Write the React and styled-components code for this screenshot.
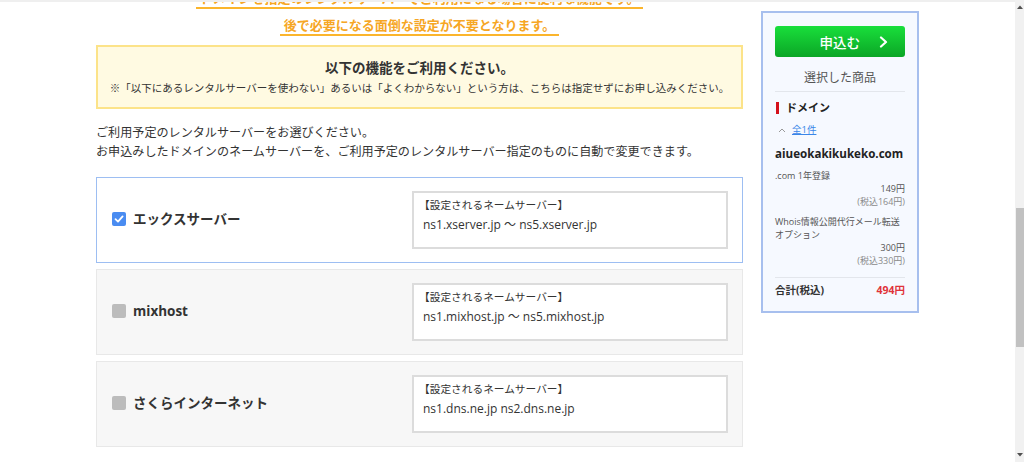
import React from "react";
import styled, { createGlobalStyle } from "styled-components";

const Global = createGlobalStyle`
  html, body { margin: 0; padding: 0; background: #fff; }
  body { font-family: "Open Sans", "Noto Sans CJK JP", sans-serif; color: #333; }
  * { box-sizing: border-box; }
`;

const Page = styled.div`
  display: flex;
  width: 1024px;
  height: 462px;
  overflow: hidden;
`;

const Viewport = styled.div`
  flex: 1;
  height: 462px;
  overflow: hidden;
  border-top: 2px solid #efefef;
`;

const Layout = styled.div`
  display: flex;
  align-items: flex-start;
  padding-left: 96px;
  gap: 18px;
`;

const Main = styled.div`
  width: 647px;
  display: flex;
  flex-direction: column;
`;

const Headlines = styled.div`
  display: flex;
  flex-direction: column;
  align-items: center;
  gap: 9px;
  margin-top: -11px;
`;

const Headline = styled.div`
  font-size: 13px;
  line-height: 15px;
  font-weight: 700;
  color: #f6a624;
  padding: 0 4px 1px;
  border-bottom: 2px solid #fbb52c;
  white-space: nowrap;
`;

const Notice = styled.div`
  margin-top: 9px;
  background: #fffae2;
  border: 2px solid #fce389;
  padding: 11px 0 11px;
  text-align: center;
`;

const NoticeTitle = styled.div`
  font-size: 13.5px;
  line-height: 20px;
  font-weight: 700;
  color: #333;
  margin-bottom: 2px;
`;

const NoticeText = styled.div`
  font-size: 10.5px;
  line-height: 16px;
  color: #333;
`;

const Lead = styled.p`
  margin: 14px 0 0;
  font-size: 12.1px;
  line-height: 19px;
  color: #333;
`;

const Options = styled.div`
  margin-top: 16px;
  display: flex;
  flex-direction: column;
  gap: 6px;
`;

const Card = styled.div`
  height: 86px;
  display: flex;
  align-items: center;
  padding: 0 14px 0 15px;
  border: 1px solid ${(p) => (p.$active ? "#9dbef2" : "#e8e8e8")};
  background: ${(p) => (p.$active ? "#fff" : "#f7f7f7")};
`;

const Choice = styled.label`
  flex: 1;
  display: flex;
  align-items: center;
  gap: 7px;
  margin-top: -2px;
  font-size: 13.5px;
  font-weight: 700;
  color: #333;
  line-height: 20px;
`;

const Box = styled.span`
  width: 14px;
  height: 14px;
  border-radius: 2px;
  background: ${(p) => (p.$checked ? "#4a8cf1" : "#bcbcbc")};
  display: flex;
  align-items: center;
  justify-content: center;
`;

const NsBox = styled.div`
  width: 316px;
  height: 58px;
  background: #fff;
  border: 2px solid #dcdcdc;
  padding: 4px 9px;
`;

const NsLabel = styled.div`
  font-size: 10.7px;
  line-height: 16px;
  margin-left: -4px;
  margin-bottom: 3px;
  color: #333;
`;

const NsValue = styled.div`
  font-size: 12px;
  line-height: 18px;
  color: #333;
`;

const Side = styled.aside`
  margin-top: 9px;
  width: 158px;
  border: 2px solid #a7bfee;
  background: #f6f9ff;
  padding: 13px 12px 12px;
  display: flex;
  flex-direction: column;
`;

const ApplyButton = styled.button`
  height: 31px;
  width: 130px;
  border: none;
  border-radius: 3px;
  background: linear-gradient(#19df3b, #0ba626);
  color: #fff;
  font-family: "Noto Sans CJK JP", sans-serif;
  font-size: 13.5px;
  font-weight: 500;
  display: flex;
  align-items: center;
  justify-content: flex-end;
  gap: 19px;
  padding: 0 17px 0 0;
`;

const SideTitle = styled.div`
  margin-top: 12px;
  font-size: 12px;
  line-height: 18px;
  text-align: center;
  color: #555;
  padding-bottom: 4px;
  border-bottom: 1px solid #e3e6ec;
`;

const Category = styled.div`
  margin-top: 8px;
  display: flex;
  align-items: center;
  gap: 7px;
  font-size: 11px;
  line-height: 16px;
  font-weight: 700;
  color: #222;
  &::before {
    content: "";
    width: 3px;
    height: 12px;
    margin-left: 1px;
    background: #d4101b;
  }
`;

const Toggle = styled.div`
  margin-top: 7px;
  display: flex;
  align-items: center;
  gap: 6px;
  font-size: 9.5px;
  line-height: 14px;
  padding-left: 3px;
`;

const Link = styled.a`
  color: #3a86e8;
  text-decoration: underline;
`;

const Domain = styled.div`
  margin-top: 8px;
  font-size: 11.6px;
  line-height: 18px;
  font-weight: 700;
  color: #222;
`;

const Item = styled.div`
  margin-top: ${(p) => p.$mt || 6}px;
  font-size: 9px;
  line-height: 13px;
  color: #555;
`;

const Price = styled.div`
  text-align: right;
  font-size: 9px;
  line-height: 13px;
  color: ${(p) => (p.$muted ? "#8a8a8a" : "#555")};
`;

const Total = styled.div`
  margin-top: 10px;
  border-top: 1px solid #e3e6ec;
  padding-top: 4px;
  padding-bottom: 1px;
  display: flex;
  justify-content: space-between;
  font-size: 10.5px;
  line-height: 16px;
  font-weight: 700;
  color: #333;
`;

const TotalPrice = styled.span`
  color: #e0333a;
`;

const Scrollbar = styled.div`
  width: 9px;
  height: 462px;
  background: #f1f1f1;
  display: flex;
  flex-direction: column;
`;

const Arrow = styled.div`
  height: 14px;
  display: flex;
  align-items: center;
  justify-content: center;
`;

const Track = styled.div`
  flex: 1;
  padding-top: 194px;
`;

const Thumb = styled.div`
  height: 139px;
  margin-left: 1px;
  background: #c1c1c1;
`;

const servers = [
  { name: "エックスサーバー", ns: "ns1.xserver.jp ～ ns5.xserver.jp", checked: true },
  { name: "mixhost", ns: "ns1.mixhost.jp ～ ns5.mixhost.jp", checked: false },
  { name: "さくらインターネット", ns: "ns1.dns.ne.jp ns2.dns.ne.jp", checked: false },
];

export default function App() {
  return (
    <Page>
      <Global />
      <Viewport>
        <Layout>
          <Main>
            <Headlines>
              <Headline>ドメインを指定のレンタルサーバーでご利用になる場合に便利な機能です。</Headline>
              <Headline>後で必要になる面倒な設定が不要となります。</Headline>
            </Headlines>
            <Notice>
              <NoticeTitle>以下の機能をご利用ください。</NoticeTitle>
              <NoticeText>
                ※「以下にあるレンタルサーバーを使わない」あるいは「よくわからない」という方は、こちらは指定せずにお申し込みください。
              </NoticeText>
            </Notice>
            <Lead>
              ご利用予定のレンタルサーバーをお選びください。
              <br />
              お申込みしたドメインのネームサーバーを、ご利用予定のレンタルサーバー指定のものに自動で変更できます。
            </Lead>
            <Options>
              {servers.map((s) => (
                <Card key={s.name} $active={s.checked}>
                  <Choice>
                    <Box $checked={s.checked}>
                      {s.checked && (
                        <svg width="10" height="10" viewBox="0 0 10 10">
                          <polyline points="1.5,5.2 4,7.6 8.6,2.4" fill="none" stroke="#fff" strokeWidth="1.8" strokeLinecap="round" strokeLinejoin="round" />
                        </svg>
                      )}
                    </Box>
                    {s.name}
                  </Choice>
                  <NsBox>
                    <NsLabel>【設定されるネームサーバー】</NsLabel>
                    <NsValue>{s.ns}</NsValue>
                  </NsBox>
                </Card>
              ))}
            </Options>
          </Main>
          <Side>
            <ApplyButton>
              申込む
              <svg width="9" height="12" viewBox="0 0 9 12">
                <polyline points="2,1.5 7,6 2,10.5" fill="none" stroke="#fff" strokeWidth="2.2" strokeLinecap="round" strokeLinejoin="round" />
              </svg>
            </ApplyButton>
            <SideTitle>選択した商品</SideTitle>
            <Category>ドメイン</Category>
            <Toggle>
              <svg width="8" height="6" viewBox="0 0 8 6">
                <polyline points="1,5 4,2 7,5" fill="none" stroke="#999" strokeWidth="1" />
              </svg>
              <Link>全1件</Link>
            </Toggle>
            <Domain>aiueokakikukeko.com</Domain>
            <Item>.com 1年登録</Item>
            <Price>149円</Price>
            <Price $muted>(税込164円)</Price>
            <Item $mt={7}>
              Whois情報公開代行メール転送
              <br />
              オプション
            </Item>
            <Price>300円</Price>
            <Price $muted>(税込330円)</Price>
            <Total>
              <span>合計(税込)</span>
              <TotalPrice>494円</TotalPrice>
            </Total>
          </Side>
        </Layout>
      </Viewport>
      <Scrollbar>
        <Arrow>
          <svg width="6" height="4" viewBox="0 0 6 4"><polygon points="0,4 3,0.5 6,4" fill="#505050" /></svg>
        </Arrow>
        <Track>
          <Thumb />
        </Track>
        <Arrow>
          <svg width="6" height="4" viewBox="0 0 6 4"><polygon points="0,0 3,3.5 6,0" fill="#505050" /></svg>
        </Arrow>
      </Scrollbar>
    </Page>
  );
}
